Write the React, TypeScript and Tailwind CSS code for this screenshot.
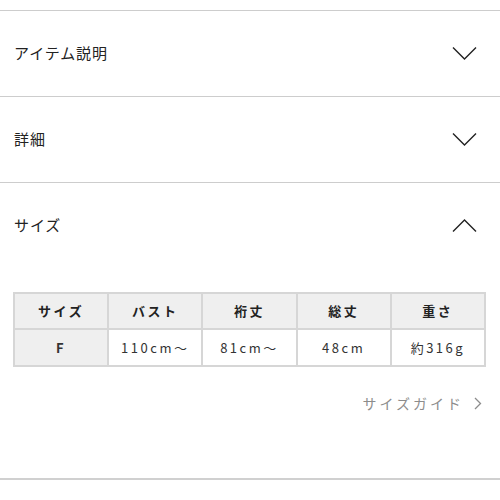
import { ReactNode } from 'react';

const font = { fontFamily: '"Noto Sans CJK JP", "Noto Sans", sans-serif' };

function Chevron({ up }: { up?: boolean }) {
  return (
    <svg width="25" height="15" viewBox="0 0 25 15" fill="none">
      <path
        d={up ? 'M1 13.5 L12.5 2 L24 13.5' : 'M1 1.5 L12.5 13 L24 1.5'}
        stroke="#222"
        strokeWidth="1.4"
      />
    </svg>
  );
}

function Section({ title, open, children }: { title: string; open?: boolean; children?: ReactNode }) {
  return (
    <div className="border-t border-[#cdcdcd]">
      <div className="h-[85px] flex items-center justify-between pl-[14px] pr-[23px]">
        <span className="text-[15px] tracking-[0.9px] text-[#222]">{title}</span>
        <Chevron up={open} />
      </div>
      {children}
    </div>
  );
}

const headers = ['サイズ', 'バスト', '裄丈', '総丈', '重さ'];
const values = ['F', '110cm〜', '81cm〜', '48cm', '約316g'];

export default function App() {
  return (
    <div className="w-[500px] h-[500px] bg-white pt-[10px] overflow-hidden" style={font}>
      <Section title="アイテム説明" />
      <Section title="詳細" />
      <Section title="サイズ" open>
        <div className="pt-[24px] px-[13px]">
          <table className="w-[473px] border-collapse table-fixed">
            <tbody>
              <tr className="h-[36px] bg-[#efefef]">
                {headers.map((h) => (
                  <td
                    key={h}
                    className="border-2 border-[#d6d6d6] text-center text-[13px] font-bold tracking-[2.5px] text-[#222]"
                  >
                    {h}
                  </td>
                ))}
              </tr>
              <tr className="h-[37px]">
                {values.map((v, i) => (
                  <td
                    key={v}
                    className={`border-2 border-[#d6d6d6] text-center text-[13px] tracking-[2.5px] text-[#333] ${
                      i === 0 ? 'bg-[#efefef] font-bold' : 'bg-white'
                    }`}
                  >
                    {v}
                  </td>
                ))}
              </tr>
            </tbody>
          </table>
        </div>
        <div className="flex justify-end items-center gap-[10px] pr-[18px] mt-[25px] h-[22px]">
          <span className="text-[14px] tracking-[3px] text-[#8c8c8c]">サイズガイド</span>
          <svg width="8" height="13" viewBox="0 0 8 13" fill="none">
            <path d="M1 1 L6.5 6.5 L1 12" stroke="#8c8c8c" strokeWidth="1.3" />
          </svg>
        </div>
        <div className="h-[64px]" />
      </Section>
      <div className="border-t-2 border-[#d0d0d0]" />
    </div>
  );
}
